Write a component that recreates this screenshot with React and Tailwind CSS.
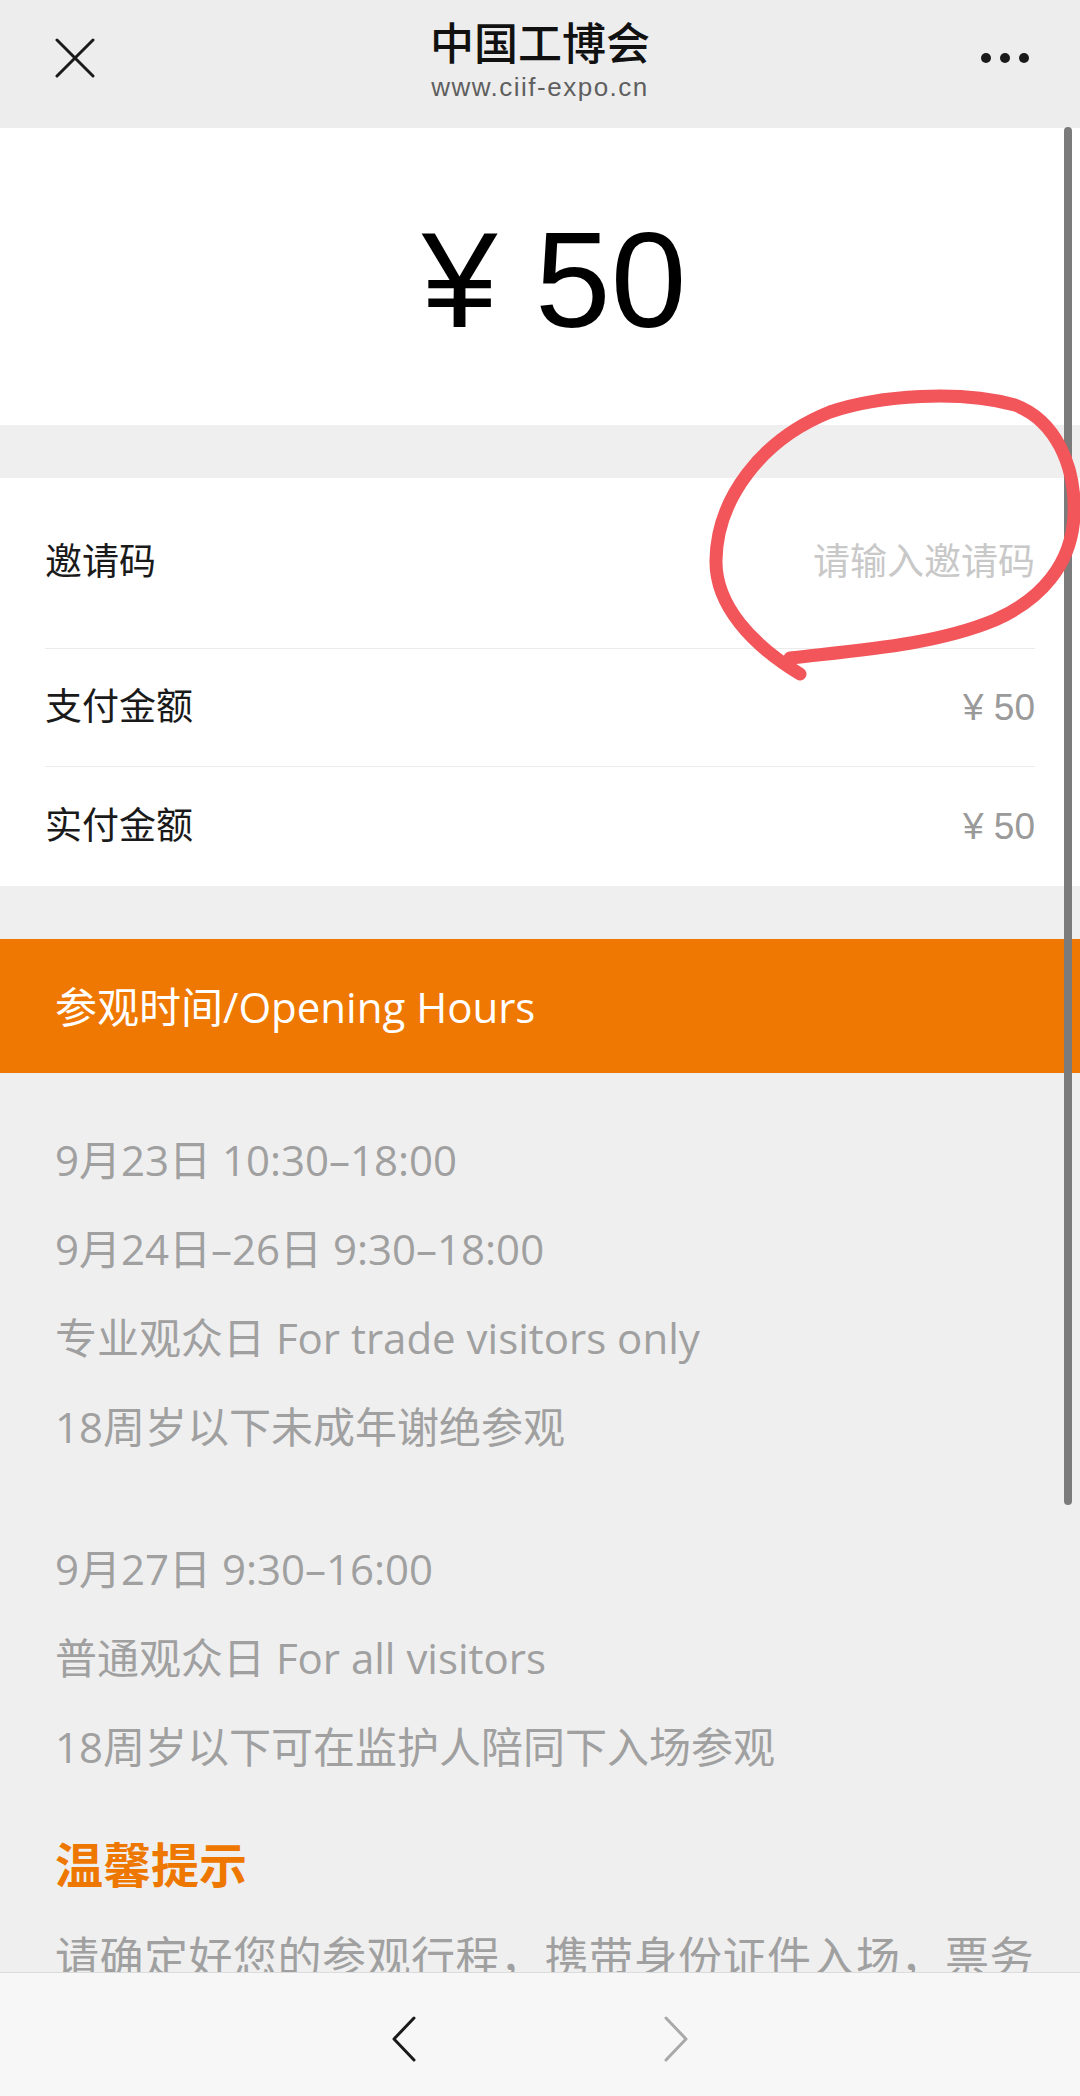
import React from 'react';

const font = "font-['Liberation_Sans','Noto_Sans_CJK_SC',sans-serif]";
const bodyFont = "font-['Open_Sans','Noto_Sans_CJK_SC',sans-serif]";

const rows = [
    { label: '邀请码', value: '请输入邀请码', placeholder: true, h: 'h-[171px]', border: true },
    { label: '支付金额', value: '¥ 50', h: 'h-[118px]', border: true },
    { label: '实付金额', value: '¥ 50', h: 'h-[119px]', border: false },
];

const tradeDays = ['9月23日 10:30–18:00', '9月24日–26日 9:30–18:00', '专业观众日 For trade visitors only', '18周岁以下未成年谢绝参观'];
const publicDay = ['9月27日 9:30–16:00', '普通观众日 For all visitors', '18周岁以下可在监护人陪同下入场参观'];

export default function App() {
    return (
        <div className={`relative w-[1080px] h-[2096px] overflow-hidden flex flex-col bg-[#efefef] ${font}`}>
            {/* Top navigation bar */}
            <div className="h-[128px] shrink-0 bg-[#ededed] grid grid-cols-[1fr_auto_1fr]">
                <div className="pl-[55px] pt-[38px]">
                    <svg width="40" height="40" viewBox="0 0 40 40" fill="none" stroke="#1a1a1a" strokeWidth="3" strokeLinecap="round">
                        <path d="M2 2 L38 38 M38 2 L2 38" />
                    </svg>
                </div>
                <div className="flex flex-col items-center pt-[19px]">
                    <div className="text-[44px] leading-[52px] font-medium text-[#111]">中国工博会</div>
                    <div className="text-[26px] leading-[32px] tracking-[1.5px] text-[#5f5f5f]">www.ciif-expo.cn</div>
                </div>
                <div className="flex justify-end items-start pr-[51px] pt-[53px] gap-[9px]">
                    <span className="w-[10px] h-[10px] rounded-full bg-[#1a1a1a]"></span>
                    <span className="w-[10px] h-[10px] rounded-full bg-[#1a1a1a]"></span>
                    <span className="w-[10px] h-[10px] rounded-full bg-[#1a1a1a]"></span>
                </div>
            </div>

            {/* Scrolling page */}
            <div className="flex-1 overflow-hidden">
                <div className="h-[297px] bg-white flex items-center justify-center pl-[28px] pt-[6px]">
                    <span className="text-[136px] leading-none text-black">¥ 50</span>
                </div>

                <div className="mt-[53px] bg-white px-[45px]">
                    {rows.map((row) => (
                        <div key={row.label} className={`${row.h} flex items-center justify-between ${row.border ? 'border-b border-[#ebebeb]' : ''}`}>
                            <span className="text-[37px] text-[#1a1a1a]">{row.label}</span>
                            <span className={`text-[37px] ${row.placeholder ? 'text-[#c8c8c8]' : 'text-[#9a9a9a]'}`}>{row.value}</span>
                        </div>
                    ))}
                </div>

                <div className="mt-[53px] h-[134px] bg-[#ef7802] flex items-center pl-[55px]">
                    <span className={`text-[42px] text-white ${bodyFont}`}>参观时间/Opening Hours</span>
                </div>

                <div className={`px-[55px] pt-[42px] ${bodyFont}`}>
                    {tradeDays.map((line) => (
                        <div key={line} className="h-[89px] leading-[89px] text-[42px] text-[#a0a0a0] whitespace-nowrap">{line}</div>
                    ))}
                    <div className="mt-[53px]">
                        {publicDay.map((line) => (
                            <div key={line} className="h-[89px] leading-[89px] text-[42px] text-[#a0a0a0] whitespace-nowrap">{line}</div>
                        ))}
                    </div>
                    <div className="mt-[44px] h-[60px] leading-[60px] text-[48px] font-bold text-[#ee7700]">温馨提示</div>
                    <p className="mt-[27px] -mr-[40px] text-[44px] leading-[70px] tracking-[0.5px] text-[#a0a0a0]">
                        请确定好您的参观行程，携带身份证件入场，票务一经售出，恕不退换，感谢您的理解与支持。
                    </p>
                </div>
            </div>

            {/* Bottom toolbar */}
            <div className="h-[124px] shrink-0 bg-[#f7f7f7] border-t border-[#dcdcdc] flex items-center justify-center gap-[248px] pt-[8px]">
                <svg width="24" height="46" viewBox="0 0 24 46" fill="none" stroke="#1a1a1a" strokeWidth="3" strokeLinecap="round" strokeLinejoin="round">
                    <path d="M22 2 L2 23 L22 44" />
                </svg>
                <svg width="24" height="46" viewBox="0 0 24 46" fill="none" stroke="#a9a9a9" strokeWidth="3" strokeLinecap="round" strokeLinejoin="round">
                    <path d="M2 2 L22 23 L2 44" />
                </svg>
            </div>

            {/* Scroll indicator */}
            <div className="absolute left-[1064px] top-[127px] w-[8px] h-[1378px] rounded-full bg-[#7b7b7b]"></div>

            {/* Hand-drawn red circle annotation */}
            <svg className="absolute inset-0 pointer-events-none" width="1080" height="2096" viewBox="0 0 1080 2096" fill="none">
                <path
                    d="M800 674 C752 645 715 605 716 560 C717 500 760 440 830 412 C880 395 960 390 1015 405 C1055 420 1076 465 1074 515 C1072 565 1040 600 995 620 C935 645 860 650 790 658"
                    stroke="#f2555a"
                    strokeWidth="13"
                    strokeLinecap="round"
                    strokeLinejoin="round"
                />
            </svg>
        </div>
    );
}
